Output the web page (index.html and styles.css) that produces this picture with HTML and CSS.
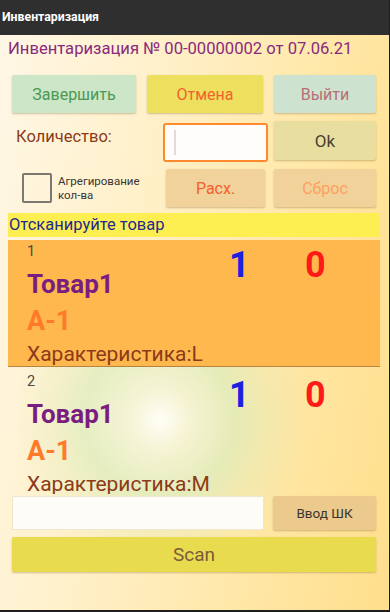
FILE: index.html
```html
<!DOCTYPE html>
<html lang="ru">
<head>
<meta charset="utf-8">
<link rel="stylesheet" href="styles.css">
</head>
<body>
<div class="app">
  <div class="titlebar">Инвентаризация</div>
  <div class="screen">
    <div class="doc-title">Инвентаризация № 00-00000002 от 07.06.21</div>
    <div class="row row-actions">
      <button class="btn btn-finish">Завершить</button>
      <button class="btn btn-cancel">Отмена</button>
      <button class="btn btn-exit">Выйти</button>
    </div>
    <div class="row row-qty">
      <div class="qty-label">Количество:</div>
      <div class="qty-input"><span class="caret"></span></div>
      <button class="btn btn-ok">Ok</button>
    </div>
    <div class="row row-agg">
      <div class="agg">
        <span class="checkbox"></span>
        <span class="agg-label">Агрегирование<br>кол-ва</span>
      </div>
      <button class="btn btn-tan btn-exp">Расх.</button>
      <button class="btn btn-tan btn-reset">Сброс</button>
    </div>
    <div class="prompt">Отсканируйте товар</div>
    <div class="list">
      <div class="item item-active">
        <div class="item-head">
          <div class="item-num">1</div>
          <div class="item-qty">1</div>
          <div class="item-diff">0</div>
        </div>
        <div class="item-name">Товар1</div>
        <div class="item-cell">А-1</div>
        <div class="item-char">Характеристика:L</div>
      </div>
      <div class="item">
        <div class="item-head">
          <div class="item-num">2</div>
          <div class="item-qty">1</div>
          <div class="item-diff">0</div>
        </div>
        <div class="item-name">Товар1</div>
        <div class="item-cell">А-1</div>
        <div class="item-char">Характеристика:M</div>
      </div>
    </div>
    <div class="row row-barcode">
      <div class="barcode-input"></div>
      <button class="btn btn-tan btn-enter">Ввод ШК</button>
    </div>
    <button class="btn btn-scan">Scan</button>
  </div>
</div>
</body>
</html>
```

FILE: styles.css
```css
* { box-sizing: border-box; }
html, body {
  margin: 0;
  padding: 0;
  width: 390px;
  height: 612px;
  background: #1e1e1e;
  overflow: hidden;
  font-family: Roboto, "Noto Sans", sans-serif;
}
.app {
  width: 389px;
  height: 610px;
  display: flex;
  flex-direction: column;
  overflow: hidden;
}
.titlebar {
  height: 35px;
  flex: none;
  background: #2f2f2f;
  color: #ffffff;
  font-weight: bold;
  font-size: 12.3px;
  line-height: 35px;
  padding-left: 2px;
}
.screen {
  flex: 1;
  display: flex;
  flex-direction: column;
  background:
    radial-gradient(circle at 160px 385px, rgba(255,255,250,0.95) 0px, rgba(242,246,220,0.75) 30px, rgba(212,236,188,0.6) 75px, rgba(222,236,185,0.3) 110px, rgba(230,235,190,0.0) 150px),
    linear-gradient(100deg, #fff7e6 0%, #fff0c8 35%, #ffe7a6 70%, #ffdf8c 100%);
  overflow: hidden;
}
.doc-title {
  color: #8a2a7c;
  font-size: 16.6px;
  line-height: 22px;
  padding: 3px 0 0 8px;
  height: 40px;
  white-space: nowrap;
}
.row {
  display: flex;
  align-items: center;
}
.btn {
  font-family: Roboto, "Noto Sans", sans-serif;
  border: none;
  border-radius: 2px;
  padding: 0;
  font-size: 16px;
  box-shadow: 0 1px 2px rgba(120, 90, 40, 0.35);
  display: flex;
  align-items: center;
  justify-content: center;
}
.row-actions {
  padding-left: 12px;
  gap: 11px;
  height: 38px;
}
.row-actions .btn { height: 38px; }
.btn-finish { width: 124px; background: #cde6c8; color: #4a9a52; }
.btn-cancel { width: 116px; background: #ede05e; color: #f4602e; }
.btn-exit { width: 102px; background: #cde2cf; color: #b86e76; }

.row-qty {
  margin-top: 8px;
  height: 41px;
  align-items: flex-start;
}
.qty-label {
  width: 163px;
  padding-left: 16px;
  padding-top: 6px;
  color: #8c3a18;
  font-size: 16.5px;
}
.qty-input {
  width: 105px;
  height: 39px;
  margin-top: 2px;
  border: 2px solid #ff8a2e;
  border-radius: 3px;
  background: #fffdfb;
  position: relative;
}
.caret {
  position: absolute;
  left: 9px;
  top: 5px;
  width: 2px;
  height: 25px;
  background: #e4d8dc;
}
.btn-ok {
  margin-left: 6px;
  width: 102px;
  height: 39px;
  background: #e7dea0;
  color: #4a4030;
  font-size: 17px;
}
.row-agg {
  margin-top: 7px;
  height: 38px;
}
.agg {
  width: 166px;
  display: flex;
  align-items: center;
  padding-left: 22px;
}
.checkbox {
  width: 30px;
  height: 30px;
  border: 2px solid #7c7872;
  border-radius: 2px;
  flex: none;
}
.agg-label {
  margin-left: 6px;
  font-size: 11.5px;
  line-height: 14px;
  color: #3a3530;
}
.btn-tan { background: #f0d29a; }
.row-agg .btn { height: 38px; }
.btn-exp { width: 99px; color: #f4602e; }
.btn-reset { width: 102px; margin-left: 9px; color: #ffa05e; }

.prompt {
  margin: 6px 9px 0 8px;
  height: 24px;
  background: #fdef52;
  color: #1e2a8c;
  font-size: 16.5px;
  line-height: 24px;
  padding-left: 1px;
  flex: none;
}
.list {
  margin: 3px 9px 0 8px;
  height: 254px;
  flex: none;
  overflow: hidden;
}
.item {
  height: 127px;
  margin-bottom: 3px;
  padding-left: 19px;
}
.item-active {
  background: #ffb84e;
  border-bottom: 1px solid #b88444;
}
.item-head {
  display: flex;
  height: 24px;
  padding-top: 4px;
}
.item-num {
  width: 202px;
  font-size: 14.5px;
  line-height: 16px;
  color: #4a4a4a;
}
.item-qty, .item-diff {
  font-size: 36px;
  font-weight: bold;
  line-height: 30px;
  margin-top: 6px;
}
.item-qty { width: 76px; color: #1a22e0; }
.item-diff { color: #ff1a1a; }
.item-name {
  font-size: 26px;
  font-weight: bold;
  color: #7a1d80;
  line-height: 38px;
  margin-top: 1px;
}
.item-cell {
  font-size: 27px;
  font-weight: bold;
  color: #ff7a2a;
  line-height: 36px;
}
.item-char {
  font-size: 21px;
  color: #8c3a18;
  line-height: 26px;
  margin-top: 2px;
}
.row-barcode {
  margin-top: 2px;
  padding-left: 12px;
  height: 34px;
  flex: none;
}
.barcode-input {
  width: 252px;
  height: 34px;
  background: #fdfcf7;
  border: 1px solid #efe6cf;
}
.btn-enter {
  width: 103px;
  height: 34px;
  margin-left: 9px;
  color: #3a3530;
  font-size: 13.5px;
  background: #ecc98c;
}
.btn-scan {
  margin: 7px 0 0 12px;
  width: 364px;
  height: 35px;
  flex: none;
  background: #e8dc4e;
  color: #7b5a3e;
  font-size: 19px;
}
```
